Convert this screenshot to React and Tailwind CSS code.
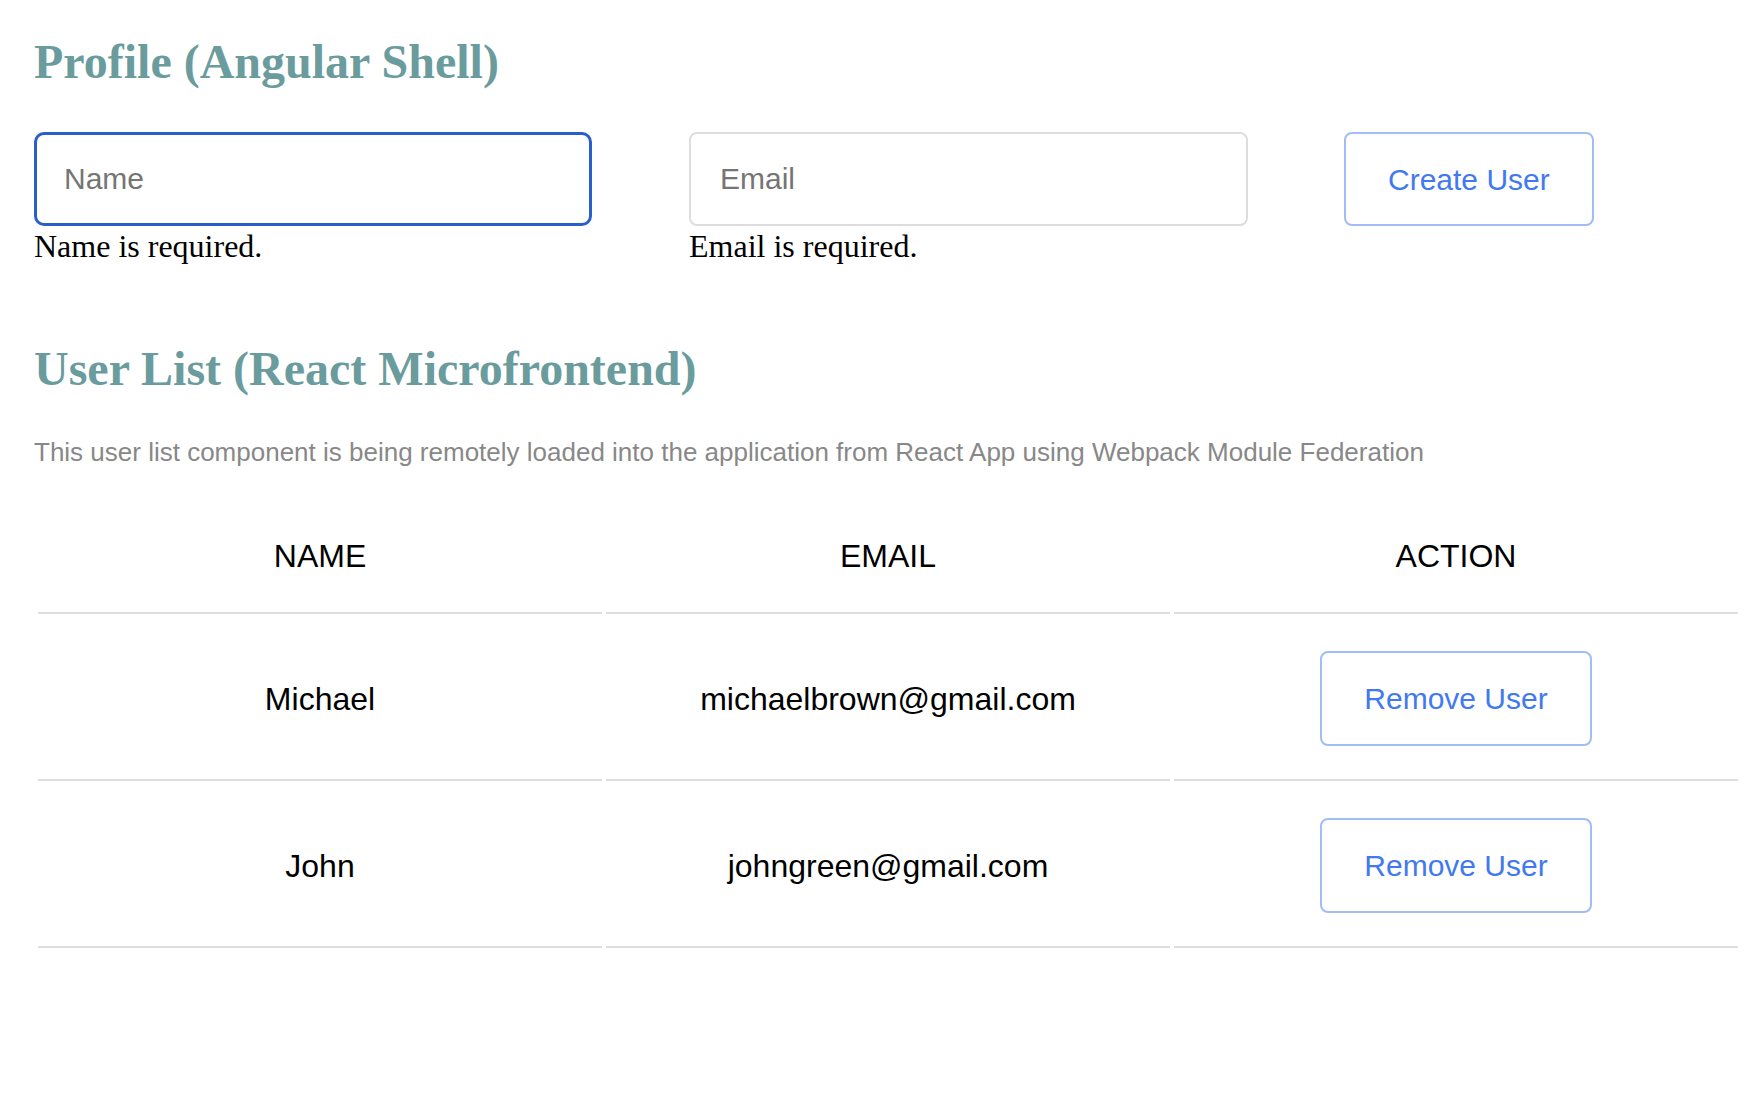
import React, { useState } from "react";

const users = [
  { name: "Michael", email: "michaelbrown@gmail.com" },
  { name: "John", email: "johngreen@gmail.com" },
];

const App = () => {
  const [name, setName] = useState("");
  const [email, setEmail] = useState("");

  return (
    <div className="min-h-screen bg-white pl-[34px] pr-[14px] pt-[38px] font-['Liberation_Sans',Arial,sans-serif] text-black">
      <h2 className="font-['Liberation_Serif','Times_New_Roman',serif] text-[48px] font-bold leading-[48px] text-[#6a9c9e]">
        Profile (Angular Shell)
      </h2>

      {/* Create user form */}
      <div className="mt-[46px] flex items-start">
        <div className="flex w-[558px] flex-col">
          <input
            type="text"
            value={name}
            onChange={(e) => setName(e.target.value)}
            placeholder="Name"
            className="h-[94px] w-full rounded-[10px] border-[3px] border-[#2a5fcb] pl-[27px] text-[30px] placeholder:text-[#757575] focus:outline-none"
          />
          <p className="mt-[4px] font-['Liberation_Serif','Times_New_Roman',serif] text-[32px] leading-[32px]">
            Name is required.
          </p>
        </div>
        <div className="ml-[97px] flex w-[559px] flex-col">
          <input
            type="email"
            value={email}
            onChange={(e) => setEmail(e.target.value)}
            placeholder="Email"
            className="h-[94px] w-full rounded-[8px] border-2 border-[#dddddd] pl-[29px] text-[30px] placeholder:text-[#757575] focus:outline-none"
          />
          <p className="mt-[4px] font-['Liberation_Serif','Times_New_Roman',serif] text-[32px] leading-[32px]">
            Email is required.
          </p>
        </div>
        <button className="ml-[96px] h-[94px] rounded-[8px] border-2 border-[#a1bcf7] bg-white px-[42px] text-[30px] text-[#4278f0]">
          Create User
        </button>
      </div>

      <h2 className="mt-[83px] font-['Liberation_Serif','Times_New_Roman',serif] text-[48px] font-bold leading-[48px] text-[#6a9c9e]">
        User List (React Microfrontend)
      </h2>
      <p className="mt-[46px] text-[26px] leading-[26px] text-[#888888]">
        This user list component is being remotely loaded into the application from React App using Webpack Module Federation
      </p>

      {/* Remote user list */}
      <table className="mt-[31px] w-full table-fixed border-separate border-spacing-1 text-[32px] leading-[32px]">
        <thead>
          <tr>
            <th className="border-b-2 border-[#dedede] py-[40px] text-center font-normal">NAME</th>
            <th className="border-b-2 border-[#dedede] py-[40px] text-center font-normal">EMAIL</th>
            <th className="border-b-2 border-[#dedede] py-[40px] text-center font-normal">ACTION</th>
          </tr>
        </thead>
        <tbody>
          {users.map((u) => (
            <tr key={u.email}>
              <td className="border-b-2 border-[#dedede] py-[33px] text-center">{u.name}</td>
              <td className="border-b-2 border-[#dedede] py-[33px] text-center">{u.email}</td>
              <td className="border-b-2 border-[#dedede] py-[33px] text-center">
                <button className="h-[95px] rounded-[8px] border-2 border-[#a1bcf7] bg-white px-[42px] align-middle text-[30px] text-[#4278f0]">
                  Remove User
                </button>
              </td>
            </tr>
          ))}
        </tbody>
      </table>
    </div>
  );
};

export default App;
